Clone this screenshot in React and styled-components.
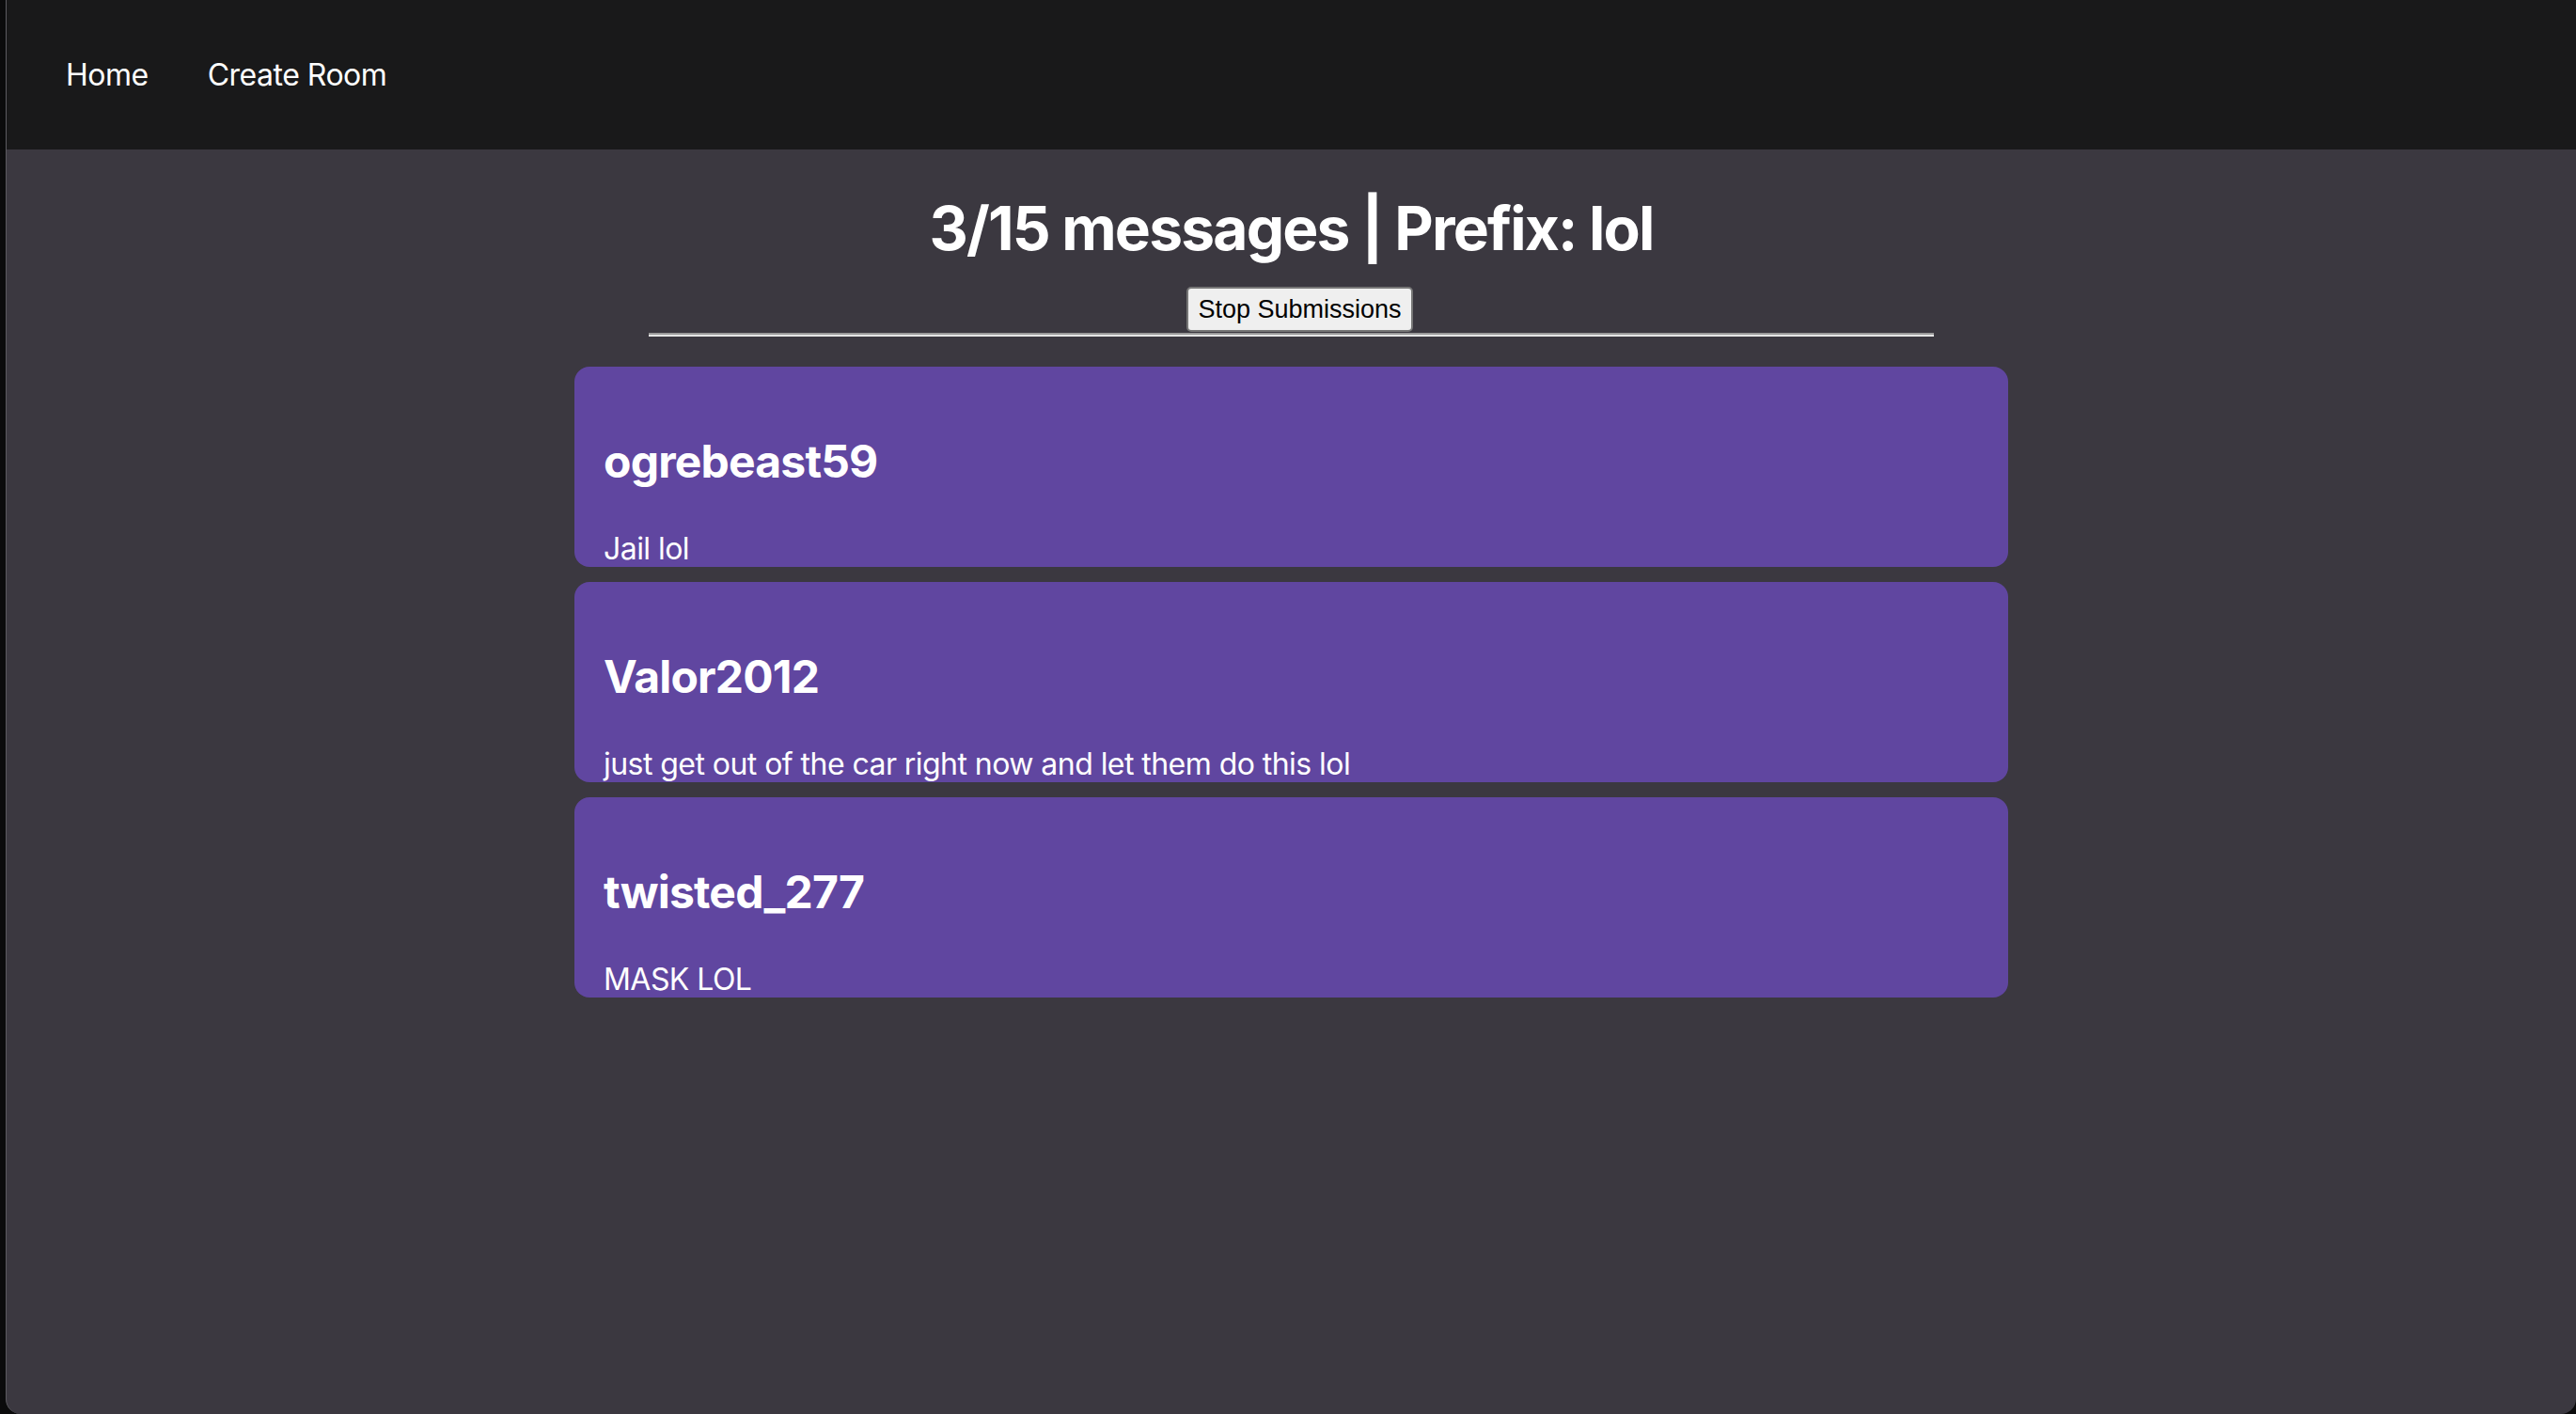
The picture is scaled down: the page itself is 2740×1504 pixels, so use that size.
import React from "react";
import styled, { createGlobalStyle } from "styled-components";

const messages = [
  { user: "ogrebeast59", text: "Jail lol" },
  { user: "Valor2012", text: "just get out of the car right now and let them do this lol" },
  { user: "twisted_277", text: "MASK LOL" },
];

const GlobalStyle = createGlobalStyle`
  html, body {
    margin: 0;
    padding: 0;
    background: #0b0b0c;
  }
  body {
    font-family: "Inter", "Noto Sans", sans-serif;
    font-size: 32px;
    color: #fff;
  }
`;

const Frame = styled.div`
  min-height: 1504px;
  margin-left: 6px;
  border-left: 1px solid #5c5b60;
  border-bottom-left-radius: 16px;
  border-bottom-right-radius: 16px;
  background: #3b3840;
  overflow: hidden;
  display: flex;
  flex-direction: column;
`;

const Nav = styled.nav`
  height: 159px;
  background: #19191a;
  display: flex;
  align-items: center;
  gap: 63px;
  padding-left: 63px;
`;

const NavLink = styled.a`
  color: #fff;
  text-decoration: none;
  font-size: 32px;
  letter-spacing: -0.5px;
  cursor: pointer;
`;

const Main = styled.main`
  display: flex;
  flex-direction: column;
  align-items: center;
`;

const Title = styled.h1`
  font-size: 64px;
  font-weight: 700;
  letter-spacing: -1.8px;
  margin: 45px 0 24px;
  line-height: normal;
`;

const StopButton = styled.button`
  font-family: "Liberation Sans", Arial, sans-serif;
  font-size: 27px;
  color: #000;
  background: #efefef;
  border: 2px solid #767676;
  border-radius: 5px;
  padding: 4px 10px;
  height: 48px;
  margin-left: 18px;
  cursor: pointer;
`;

const Divider = styled.hr`
  width: 50%;
  margin: 1px 0 32px;
  border: none;
  border-top: 2px solid #9a9a9a;
  border-bottom: 2px solid #e6e6e6;
`;

const List = styled.div`
  width: 1525px;
  display: flex;
  flex-direction: column;
  gap: 16px;
`;

const Card = styled.div`
  background: #6046a0;
  border-radius: 16px;
  padding: 71px 31px 0;
`;

const User = styled.h2`
  font-size: 48px;
  font-weight: 700;
  letter-spacing: -0.8px;
  margin: 0 0 44px;
  line-height: normal;
`;

const Text = styled.p`
  font-size: 32px;
  letter-spacing: -0.55px;
  margin: 0;
  line-height: normal;
`;

export default function App() {
  return (
    <>
      <GlobalStyle />
      <Frame>
        <Nav>
          <NavLink>Home</NavLink>
          <NavLink>Create Room</NavLink>
        </Nav>
        <Main>
          <Title>3/15 messages | Prefix: lol</Title>
          <StopButton type="button">Stop Submissions</StopButton>
          <Divider />
          <List>
            {messages.map((m) => (
              <Card key={m.user}>
                <User>{m.user}</User>
                <Text>{m.text}</Text>
              </Card>
            ))}
          </List>
        </Main>
      </Frame>
    </>
  );
}
